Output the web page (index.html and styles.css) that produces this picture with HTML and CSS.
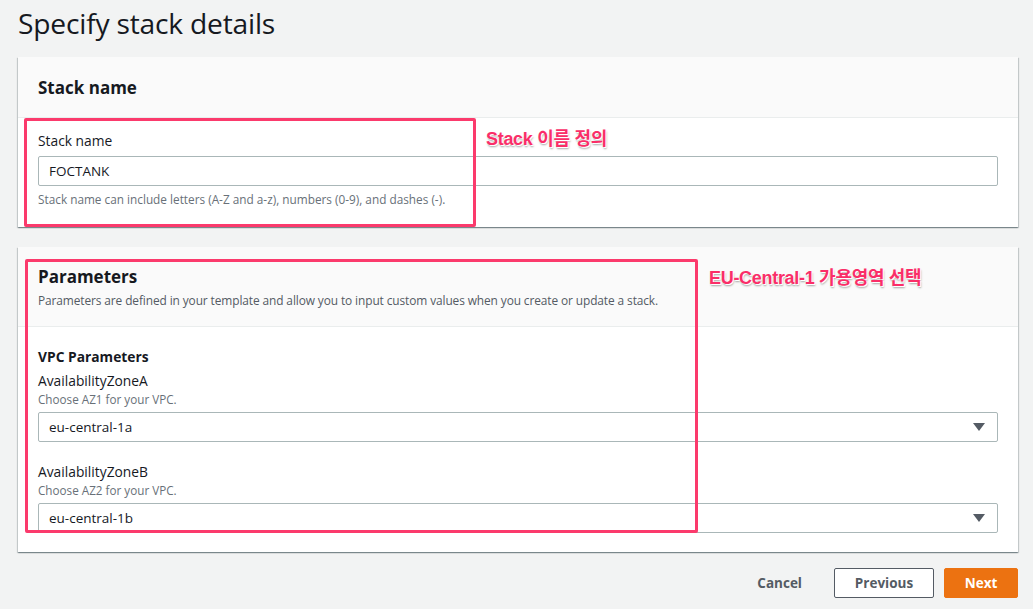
FILE: index.html
```html
<!DOCTYPE html>
<html lang="en">
<head>
<meta charset="utf-8">
<title>Specify stack details</title>
<link rel="stylesheet" href="styles.css">
</head>
<body>
<div class="page">
  <h1 class="title">Specify stack details</h1>

  <section class="card">
    <div class="card-header">
      <h2 class="card-title">Stack name</h2>
    </div>
    <div class="card-body card-body--name">
      <label class="field-label">Stack name</label>
      <div class="input">FOCTANK</div>
      <p class="hint">Stack name can include letters (A-Z and a-z), numbers (0-9), and dashes (-).</p>
    </div>
    <div class="mark mark--name"></div>
    <div class="note note--name">Stack 이름 정의</div>
  </section>

  <section class="card">
    <div class="card-header card-header--params">
      <h2 class="card-title">Parameters</h2>
      <p class="card-desc">Parameters are defined in your template and allow you to input custom values when you create or update a stack.</p>
    </div>
    <div class="card-body card-body--params">
      <h3 class="group-title">VPC Parameters</h3>
      <div class="field">
        <div class="field-name">AvailabilityZoneA</div>
        <div class="field-desc">Choose AZ1 for your VPC.</div>
        <div class="select"><span>eu-central-1a</span><span class="caret"></span></div>
      </div>
      <div class="field">
        <div class="field-name">AvailabilityZoneB</div>
        <div class="field-desc">Choose AZ2 for your VPC.</div>
        <div class="select"><span>eu-central-1b</span><span class="caret"></span></div>
      </div>
    </div>
    <div class="mark mark--params"></div>
    <div class="note note--params">EU-Central-1 가용영역 선택</div>
  </section>

  <div class="actions">
    <button class="btn btn--link">Cancel</button>
    <button class="btn btn--normal">Previous</button>
    <button class="btn btn--primary">Next</button>
  </div>
</div>
</body>
</html>
```

FILE: styles.css
```css
* { box-sizing: border-box; }

html, body {
  margin: 0;
  padding: 0;
  background: #f2f3f3;
}

body {
  font-family: "Open Sans", "Noto Sans", sans-serif;
  color: #16191f;
  width: 1033px;
  height: 609px;
  overflow: hidden;
}

.page {
  padding: 0 15px 0 18px;
}

.title {
  margin: 0;
  padding-top: 4px;
  height: 57px;
  font-size: 28.2px;
  line-height: 38px;
  font-weight: 400;
  letter-spacing: -0.2px;
  color: #16191f;
}

.card {
  position: relative;
  background: #fff;
  box-shadow: 0 1px 1px 0 rgba(0, 28, 36, 0.3), 1px 1px 1px 0 rgba(0, 28, 36, 0.15), -1px 1px 1px 0 rgba(0, 28, 36, 0.15);
  margin-bottom: 20px;
}

.card-header {
  background: #fafafa;
  border-bottom: 1px solid #eaeded;
  height: 61px;
  padding: 19px 20px 0;
}

.card-header--params {
  height: 80px;
  padding-top: 18px;
}

.card-title {
  margin: 0;
  font-size: 17px;
  line-height: 24px;
  font-weight: 700;
  color: #16191f;
}

.card-desc {
  margin: 0;
  font-size: 11.9px;
  line-height: 22px;
  color: #545b64;
  letter-spacing: -0.1px;
}

.card-body {
  padding: 0 20px;
}

.card-body--name {
  height: 109px;
  padding-top: 13px;
}

.card-body--params {
  height: 225px;
  padding-top: 20px;
}

.field-label,
.field-name {
  display: block;
  font-size: 13.8px;
  line-height: 20px;
  color: #16191f;
}

.input {
  margin-top: 5px;
  height: 30px;
  border: 1px solid #aab7b8;
  border-radius: 2px;
  padding: 0 10px;
  font-size: 13.5px;
  line-height: 28px;
  color: #16191f;
}

.hint {
  margin: 4px 0 0;
  font-size: 11.8px;
  line-height: 18px;
  color: #687078;
}

.group-title {
  margin: 0;
  font-size: 13.8px;
  line-height: 20px;
  font-weight: 700;
  color: #16191f;
}

.field {
  margin-top: 4px;
}

.field + .field {
  margin-top: 20px;
}

.field-desc {
  font-size: 11.7px;
  line-height: 16px;
  color: #687078;
}

.select {
  margin-top: 5px;
  height: 30px;
  border: 1px solid #aab7b8;
  border-radius: 2px;
  padding: 0 12px 0 10px;
  font-size: 13.5px;
  line-height: 28px;
  color: #16191f;
  display: flex;
  justify-content: space-between;
  align-items: center;
}

.caret {
  width: 0;
  height: 0;
  border-left: 6px solid transparent;
  border-right: 6px solid transparent;
  border-top: 8px solid #545b64;
}

/* annotation overlays */
.mark {
  position: absolute;
  border: 3px solid #fb3a6c;
  border-radius: 2px;
}

.mark--name {
  left: 6px;
  top: 61px;
  width: 452px;
  height: 109px;
}

.mark--params {
  left: 7px;
  top: 12px;
  width: 673px;
  height: 274px;
}

.note {
  position: absolute;
  font-family: "Liberation Sans", "Noto Sans CJK KR", sans-serif;
  font-weight: 700;
  font-size: 18px;
  line-height: 20px;
  letter-spacing: -0.3px;
  color: #fa2e68;
  text-shadow: 0 0 1px #fff, 1px 1px 0 #fff, 1px 2px 2px rgba(0, 0, 0, 0.35);
  white-space: nowrap;
}

.note--name {
  left: 468px;
  top: 72px;
}

.note--params {
  left: 691px;
  top: 21px;
}

.actions {
  display: flex;
  justify-content: flex-end;
  align-items: center;
  gap: 12px;
  margin-top: -4px;
}

.btn {
  font-family: "Open Sans", "Noto Sans", sans-serif;
  font-size: 13.5px;
  font-weight: 700;
  height: 30px;
  border-radius: 2px;
  padding: 0 20px;
  cursor: pointer;
}

.btn--link {
  background: none;
  border: none;
  color: #545b64;
}

.btn--normal {
  background: #fff;
  border: 1px solid #545b64;
  color: #545b64;
  width: 100px;
  padding: 0;
}

.btn--primary {
  background: #ec7211;
  border: 1px solid #ec7211;
  color: #fff;
  width: 74px;
  padding: 0;
  margin-left: -2px;
}
```
